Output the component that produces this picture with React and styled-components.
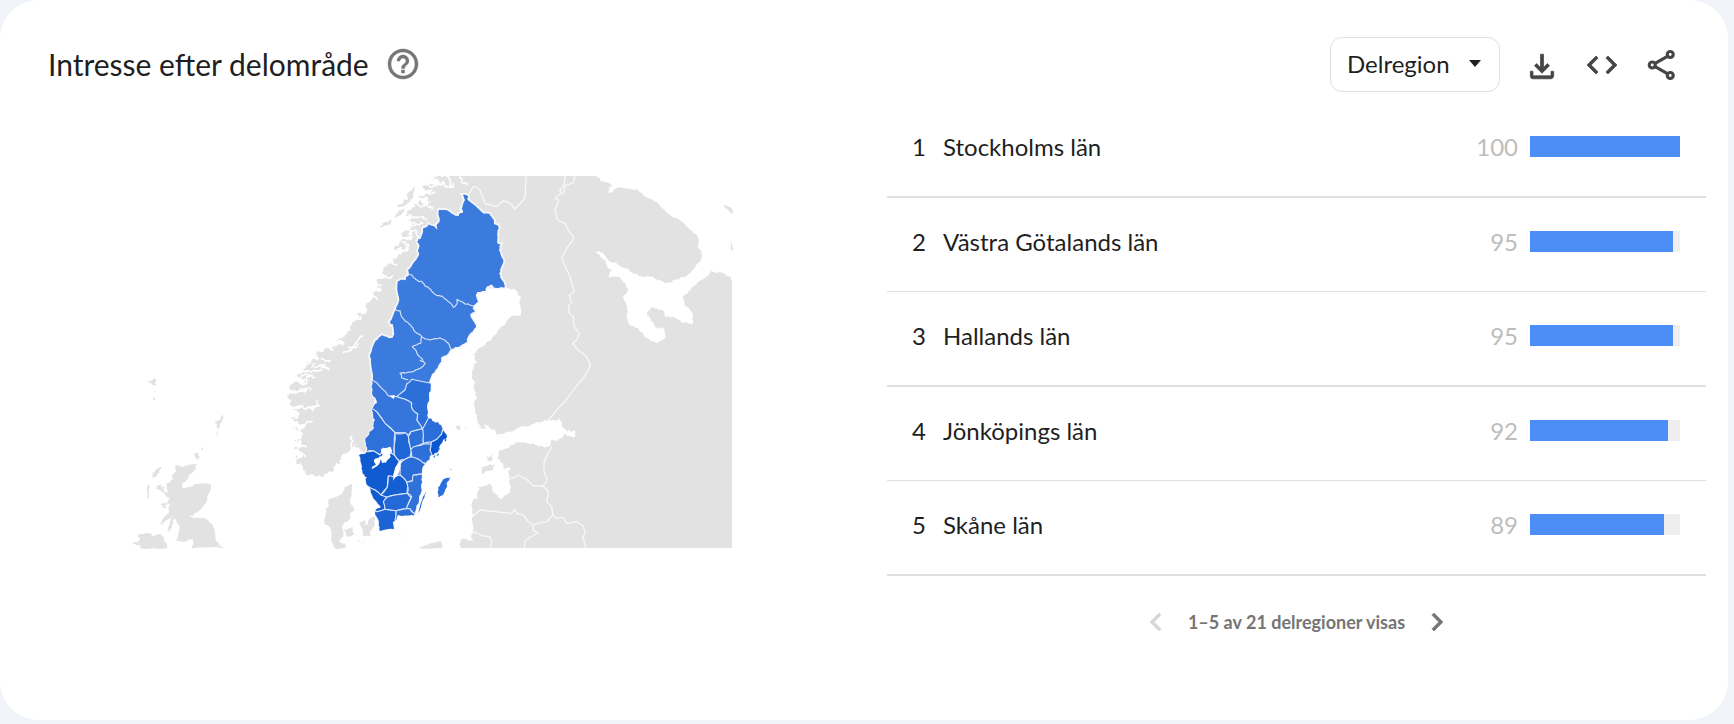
import React, { useState } from "react";
import styled, { createGlobalStyle } from "styled-components";

const GlobalStyle = createGlobalStyle`
  *, *::before, *::after { box-sizing: border-box; }
  body {
    margin: 0;
    background: #f0f4f9;
    color: #1f1f1f;
    font-family: "Google Sans", Lato, Roboto, sans-serif;
  }
  button, select { font: inherit; color: inherit; }
`;

const Card = styled.main`
  margin: 0 6px 4px 0;
  background: #fff;
  border-radius: 38px;
`;

const Header = styled.header`
  display: flex;
  align-items: flex-start;
  justify-content: space-between;
  gap: 24px;
  min-height: 103px;
  padding: 37px 48px 0 48px;
`;

const TitleGroup = styled.div`
  display: flex;
  align-items: center;
  gap: 16px;
  height: 54px;
`;

const Title = styled.h1`
  margin: 0;
  font-size: 30px;
  line-height: 36px;
  font-weight: 400;
`;

const IconButton = styled.button`
  display: flex;
  align-items: center;
  justify-content: center;
  width: 36px;
  height: 36px;
  padding: 0;
  border: 0;
  background: none;
  color: ${(p) => p.$color || "#444746"};
  cursor: pointer;
  &:disabled { cursor: default; }
`;

const Icon = styled.svg`
  width: 36px;
  height: 36px;
  flex: none;
  fill: currentColor;
  stroke: currentColor;
  stroke-width: ${(p) => p.$weight || 0};
`;

const Actions = styled.div`
  display: flex;
  align-items: center;
  gap: 24px;
`;

const SelectBox = styled.label`
  position: relative;
  display: block;
`;

const Select = styled.select`
  appearance: none;
  width: 170px;
  height: 55px;
  padding: 0 44px 2px 16px;
  border: 1px solid #e0e0e0;
  border-radius: 12px;
  background: #fff;
  font-size: 24px;
  cursor: pointer;
`;

const Caret = styled.svg`
  position: absolute;
  top: 23px;
  right: 18px;
  width: 14px;
  height: 8px;
  fill: #1f1f1f;
  pointer-events: none;
`;

const Content = styled.div`
  display: grid;
  grid-template-columns: minmax(0, 839fr) minmax(0, 819fr);
  padding: 0 22px 52px 48px;
`;

const MapFigure = styled.figure`
  margin: 0;
`;

const MapSvg = styled.svg`
  display: block;
  width: 100%;
  height: auto;
`;

const Ranking = styled.table`
  width: 100%;
  border-collapse: separate;
  border-spacing: 0;
  font-size: 24px;
  line-height: 28px;
`;

const Row = styled.tr`
  height: 94px;
  & > * {
    padding: 30px 0 0;
    border-bottom: 1px solid #e0e0e0;
    vertical-align: top;
    text-align: left;
    font-weight: 400;
  }
  &:nth-child(odd) { height: 95px; }
  &:nth-child(odd) > * { border-bottom-width: 2px; }
`;

const Rank = styled.td`
  width: 56px;
  && { padding-left: 25px; }
`;

const Value = styled.td`
  width: 80px;
  color: #bdbdbd;
  && { text-align: right; padding-right: 12px; }
`;

const BarCell = styled.td`
  width: 176px;
  && { padding: 33px 26px 0 0; }
`;

const Track = styled.div`
  height: 21px;
  background: #eee;
`;

const Fill = styled.div`
  height: 100%;
  background: #4c8df6;
`;

const Pager = styled.nav`
  display: flex;
  align-items: center;
  justify-content: center;
  gap: 14px;
  height: 92px;
  color: #757575;
  font-size: 18px;
  line-height: 24px;
  font-weight: 700;
`;

const parse = (s) => s.trim().split(/\s+/).map((p) => p.split(",").map(Number));

// Map tiles are drawn at three times map scale, each with its own origin.
const at = (ox, oy, s) => parse(s).map(([x, y]) => [ox + x / 3, oy + y / 3]);

const noise = (n) => {
  const v = Math.sin(n * 127.1 + 11.7) * 43758.5453;
  return (v - Math.floor(v)) * 2 - 1;
};

// Midpoint displacement gives the coast its ragged edge.
const rough = (pts, amp, depth = 2) => {
  let out = pts;
  let a = amp;
  for (let d = 0; d < depth; d += 1) {
    const next = [];
    out.forEach((p, i) => {
      next.push(p);
      const q = out[i + 1];
      if (!q) return;
      const dx = q[0] - p[0];
      const dy = q[1] - p[1];
      const len = Math.hypot(dx, dy) || 1;
      const k = noise(i + d * 57 + p[0]) * Math.min(a, len / 2);
      next.push([(p[0] + q[0]) / 2 - (dy / len) * k, (p[1] + q[1]) / 2 + (dx / len) * k]);
    });
    out = next;
    a *= 0.7;
  }
  return out;
};

const path = (pts) => "M" + pts.map(([x, y]) => `${x.toFixed(1)} ${y.toFixed(1)}`).join("L");

const KOLA = parse(`597,176 602,182 612,185 608,193 614,190 618,187 629,189 640,192 657,202 670,215 687,227 697,235
698,248 702,252 700,262 693,270 683,277 672,282 663,282 650,277 637,274 627,268 618,265 612,262 603,253 595,252
602,258 607,265 612,270 608,277 618,277 626,285 627,293 623,298 627,307 627,317 629,324 635,328 642,332 647,338
657,343 665,338 663,328 655,327 647,315 652,307 662,310 665,317 673,317 683,323 693,323 692,313 684,302 684,295
695,285 705,278 712,270 717,273 723,273 728,277 732,280`);
const BALTIC = parse(`460,548 460,540 473,540 473,530 472,517 472,503 477,493 478,487 488,483 495,493 502,499
509,493 509,477 511,468 503,467 500,460 500,450 510,445 523,442 537,445 548,447 552,440 562,438 565,434 575,436
573,431 563,428 558,417 552,421 537,422 520,427 497,435 494,429 490,428 485,424 480,425 477,420 475,410 477,398
475,383 472,370 477,362 473,355 485,345 497,333 510,317 521,314 521,298 515,290 506,288`);
const NORWAY = parse(`364,453 359,452 354,448 352,437 351,448 342,455 333,467 326,474 317,476 303,470 296,463
295,456 302,457 294,448 303,446 294,440 303,433 293,428 305,424 291,418 300,414 290,409 316,407 290,405 289,393
308,390 289,388 293,384 306,380 298,374 318,370 303,369 316,363 306,362 322,360 316,354 334,350 343,345 336,341
347,334 360,320 358,316 366,308 367,303 374,292 380,287 377,282 387,276 383,270 393,258 405,252 394,250 406,240
413,236 406,231 416,224 408,221 421,214 411,211 422,207 414,203 429,203 418,196 433,190 423,186 440,184 427,181
434,177 445,176`);
const LAND = [
  ...rough(KOLA, 1.5, 3),
  [732, 548],
  ...rough(BALTIC, 2, 3),
  [440, 290], [400, 340], [376, 380], [372, 440],
  ...rough(NORWAY, 4, 3),
];

const NORTH = [350, 170];
const SOUTH = [350, 360];
const EAST = [540, 170];
const WEST = [120, 360];
const SOUTHEAST = [440, 360];
const NORDLAND = [280, 170];

const ISLANDS = [
  [WEST, "165,315 195,318 230,312 230,325 205,352 188,368 184,384 225,372 270,372 273,388 262,420 240,450 222,462 205,470 245,475 265,480 280,500 290,545 312,565 215,565 220,535 195,545 168,542 180,500 165,475 146,512 160,465 124,492 148,455 150,430 128,440 150,415 120,398 146,395 138,372 158,358 152,345 168,335"],
  [WEST, "38,552 60,535 52,525 85,520 100,528 120,522 130,530 142,556 140,565 60,565 62,556"],
  [WEST, "96,350 104,335 125,320 118,340 105,352"],
  [WEST, "84,375 90,375 86,415 82,412"],
  [WEST, "118,375 124,382 130,376 138,400 122,392 106,385"],
  [WEST, "124,430 140,425 138,445 126,442"],
  [WEST, "140,515 150,485 165,465 160,490 148,512"],
  [WEST, "120,492 132,484 128,498"],
  [WEST, "222,285 234,278 240,290 230,298"],
  [WEST, "236,264 240,266 238,270"],
  [WEST, "248,262 254,264 246,274"],
  [WEST, "283,185 300,180 308,165 300,192 292,210 293,225 289,222 290,200"],
  [WEST, "84,68 96,62 106,56 104,70 98,66 106,78 94,70"],
  [WEST, "100,92 106,96 103,98"],
  [WEST, "102,112 105,114 104,120"],
  [WEST, "625,418 660,405 680,378 695,372 695,405 690,430 706,450 690,462 688,480 665,500 668,530 658,545 675,550 672,565 645,565 632,540 632,508 615,495 617,460 625,440"],
  [WEST, "672,508 698,500 702,525 685,532"],
  [SOUTH, "28,490 45,482 50,495 60,475 75,470 72,500 60,515 62,530 38,528"],
  [SOUTH, "22,540 42,545 40,552"],
  [SOUTH, "205,565 240,550 275,545 278,565"],
  [SOUTH, "150,522 160,530 154,533"],
  [SOUTHEAST, "125,325 150,312 165,318 160,328 130,342"],
  [SOUTHEAST, "138,290 160,286 155,303 144,300"],
  [SOUTHEAST, "48,200 56,196 60,204 52,208"],
  [SOUTHEAST, "72,202 80,204 76,208"],
  [SOUTHEAST, "118,205 132,196 140,206 128,210"],
  [EAST, "552,105 578,120 578,133 565,120"],
  [EAST, "578,205 570,238 578,242"],
  [NORDLAND, "350,108 372,94 368,84 385,90 384,68 405,48 400,72 390,95 375,104 352,115"],
  [NORDLAND, "380,125 405,110 420,90 430,96 420,118 396,132 378,138"],
  [NORDLAND, "372,115 362,135 340,145 345,135"],
  [NORDLAND, "300,170 310,158 335,148 325,165 306,172"],
  [NORDLAND, "362,192 388,178 382,190 395,195 372,202"],
  [NORDLAND, "155,530 185,522 160,540"],
  [NORDLAND, "226,432 245,428 240,440"],
];

const FJORDS = [
  [NORDLAND, "455,25 475,45 492,35 502,52 520,40"],
  [NORDLAND, "500,20 512,32 515,52"],
  [NORDLAND, "540,20 548,38 562,45"],
  [NORDLAND, "430,60 448,70 465,66"],
  [NORDLAND, "440,45 455,52 468,48"],
  [NORDLAND, "402,90 425,110 440,105 455,118"],
  [NORDLAND, "425,95 438,90 450,96"],
  [NORDLAND, "400,145 425,140 440,150"],
  [NORDLAND, "395,158 412,164 428,160"],
  [NORDLAND, "380,180 410,185 418,200"],
  [NORDLAND, "365,215 385,230 380,242"],
  [NORDLAND, "352,238 372,240 385,236"],
  [NORDLAND, "310,320 325,325 338,316"],
  [NORDLAND, "325,262 335,280 350,286"],
  [NORDLAND, "280,350 305,345"],
  [NORDLAND, "270,385 285,380 292,388"],
  [NORDLAND, "190,548 215,540 232,515 248,498"],
  [NORDLAND, "205,530 235,522"],
  [NORDLAND, "50,630 85,615 105,622"],
  [NORDLAND, "95,590 125,588 148,600"],
  [NORDLAND, "125,565 140,572 150,570"],
  [WEST, "515,145 550,142 580,152 592,122"],
  [WEST, "575,140 598,138"],
  [WEST, "525,235 545,205 560,188 577,184"],
  [WEST, "520,175 525,200 530,250"],
  [WEST, "512,92 550,92 572,90"],
  [WEST, "540,68 560,72 568,50"],
  [WEST, "535,250 558,262"],
  [WEST, "522,270 540,278 556,288"],
  [WEST, "694,228 692,250 698,275"],
  [WEST, "568,35 600,32 615,12"],
  [WEST, "600,14 620,22"],
];

const BORDERS = [
  [NORTH, "355,75 370,50 380,52 390,60 405,100 440,110 460,92 480,100 495,117 525,85 528,20"],
  [EAST, "75,20 72,45 60,60 62,70 45,85 56,90 45,120 52,150 75,160 88,185 100,200 98,210 80,235 65,265 90,320 103,365 88,375 95,400 85,405 88,430 100,440 103,470 118,490 110,510 98,520 115,540 140,560 152,585 145,600"],
  [EAST, "105,20 100,38 75,48 70,70 62,70"],
  [SOUTHEAST, "445,0 452,15 430,55 420,65 370,130 355,145 325,180"],
  [SOUTHEAST, "335,262 318,290 312,310 312,335 322,360 310,378 280,378 262,360 235,345 225,352 210,355"],
  [SOUTHEAST, "310,378 325,395 320,425 335,440 338,465 320,485 300,488 280,495 265,485 250,465 230,460 225,448 215,460 165,455 120,450 97,470"],
  [SOUTHEAST, "338,465 350,475 370,472 380,490 410,485 430,498 436,520 428,530 438,565"],
  [SOUTHEAST, "280,495 280,512 293,518 270,532 255,542 253,565"],
  [SOUTHEAST, "100,515 130,528 150,530 155,545 150,565"],
];

const SWEDEN = parse(`461,194 468,195 469,200 482,211 490,213 495,220 496,224 500,227 498,242 502,243 500,250 504,259
501,270 501,277 506,288 497,289 492,286 488,287 487,293 478,293 479,302 474,307 476,312 471,315 477,326 472,333
468,342 458,348 450,352 442,358 441,363 435,373 430,382 429,393 427,407 428,418 432,421 438,422 443,430 447,437
442,443 438,452 432,455 429,460 424,465 422,477 421,487 419,500 415,512 412,515 398,515 393,522 394,529 380,531
379,523 375,512 381,507 372,495 367,485 367,477 363,474 362,467 359,455 366,453 366,443 367,437 374,428 375,420
372,410 377,403 372,393 372,380 370,360 369,355 375,340 382,334 392,337 392,325 388,322 395,309 398,297 397,281
405,279 408,273 407,270 418,255 418,248 416,241 420,238 422,229 428,223 436,227 439,220 438,209 450,211 458,215
462,212 460,209 464,200 461,194`);

const COUNTIES = [
  ["Gävleborg", "#2c6fd9", "290,72 240,69 185,58 170,72 165,90 140,110 165,118 185,130 187,148 203,162 200,180 210,195 218,206 232,200 240,175 290,175"],
  ["Dalarna", "#3575dc", "45,58 65,60 80,68 95,85 115,108 140,110 165,118 185,130 187,148 203,162 200,180 218,206 182,215 175,228 165,218 135,218 105,190 80,155 65,145 45,150"],
  ["Värmland", "#2f71da", "20,150 65,145 80,155 105,190 135,218 133,255 133,285 100,265 90,285 70,272 48,275 20,278"],
  ["Örebro", "#2067d6", "135,218 150,222 165,218 175,228 176,245 185,265 180,290 165,298 148,303 133,285 133,255"],
  ["Västmanland", "#2d70da", "175,228 182,215 218,206 222,230 220,250 200,258 182,268"],
  ["Uppsala", "#2b6ed9", "218,206 240,165 290,175 278,212 270,235 245,245 222,250 220,230"],
  ["Stockholm", "#0b57d0", "245,245 260,238 275,222 278,210 320,205 310,310 245,310 240,265"],
  ["Södermanland", "#2d70da", "182,268 200,258 222,252 243,252 240,270 255,310 218,308 205,298 185,290"],
  ["Östergötland", "#2a6dd9", "150,345 148,310 165,298 185,290 205,298 218,308 250,315 240,350 210,342 190,345 188,362 170,366"],
  ["Västra Götaland", "#115bd1", "10,278 48,275 70,272 90,285 100,265 133,285 148,303 130,350 115,348 112,382 92,405 75,390 55,380 10,382"],
  ["Jönköping", "#165fd3", "115,348 130,350 150,345 170,366 174,382 172,400 135,405 110,412 92,405 112,382"],
  ["Kalmar", "#3072da", "170,366 188,362 190,345 210,342 250,345 235,470 192,460 180,446 168,446 185,410 172,400 174,382"],
  ["Kronoberg", "#2469d7", "110,412 135,405 172,400 183,412 168,446 140,452 105,448 100,425"],
  ["Halland", "#115bd1", "40,378 55,380 75,390 92,405 110,412 100,425 105,448 80,455 40,420"],
  ["Skåne", "#1c64d5", "60,452 80,455 105,448 138,452 140,480 140,530 60,530"],
  ["Blekinge", "#2c6fd9", "138,452 168,446 180,446 192,460 210,480 135,480"],
];

const COUNTY_LINES = [
  [NORTH, "172,312 185,315 195,325 208,335 218,336 225,348 242,358 258,375 275,378 292,392 310,412 322,398 322,388 345,402 360,405 378,412"],
  [NORTH, "132,418 150,422 155,440 170,455 182,465 195,485 215,500 240,510 270,503 295,520 302,535 302,552"],
  [NORTH, "215,500 212,520 187,530 200,548 220,572"],
  [SOUTH, "210,0 226,10 210,25 185,36 150,40 155,54 175,60"],
];

const LAKES = [
  "65,328 78,312 72,300 88,290 98,284 94,266 120,260 126,270 122,290 108,308 98,310 92,298 82,318",
  "128,362 134,330 146,308 158,300 150,325 138,350",
  "118,108 135,106 132,118",
];

const OUTER_ISLANDS = [
  "265,412 265,382 280,358 302,352 290,368 290,382 280,404",
  "205,460 214,425 228,394 224,412 210,450",
  "258,288 262,278 266,286",
  "262,262 272,266 266,272",
  "250,290 256,286 254,296",
  "284,236 290,240 284,244",
  "300,326 304,326 302,330",
];

const shape = ([[ox, oy], s]) => path(at(ox, oy, s));

function RegionMap() {
  const sweden = path(rough(SWEDEN, 1.3)) + "Z";
  return (
    <MapFigure>
      <MapSvg viewBox="48 103 839 460" role="img" aria-label="Karta över Sverige">
        <defs>
          <clipPath id="frame"><rect x="130" y="176" width="603" height="373" /></clipPath>
          <clipPath id="sweden"><path d={sweden} /></clipPath>
        </defs>
        <g clipPath="url(#frame)">
          <path d={path(LAND) + "Z"} fill="#e2e2e2" />
          {ISLANDS.map((i) => (
            <path key={i[1]} d={path(rough([...at(...i[0], i[1]), at(...i[0], i[1])[0]], 1.4)) + "Z"} fill="#e2e2e2" />
          ))}
          <g fill="none" stroke="#fff" strokeLinejoin="round" strokeLinecap="round">
            {FJORDS.map((f) => (
              <path key={f[1]} d={path(rough(at(...f[0], f[1]), 2.4, 3))} strokeWidth="1.4" />
            ))}
            {BORDERS.map((b) => <path key={b[1]} d={shape(b)} stroke="#f8f8f8" strokeWidth="1.3" />)}
          </g>
          <path d={sweden} fill="#3c7bde" stroke="#f4f6fb" strokeWidth="1.8" />
          <g clipPath="url(#sweden)" stroke="#dbe6fa" strokeWidth="1.1" strokeLinejoin="round">
            {COUNTIES.map(([name, fill, s]) => (
              <path key={name} d={path(rough([...at(...SOUTH, s), at(...SOUTH, s)[0]], 0.7, 1)) + "Z"} fill={fill} />
            ))}
            {COUNTY_LINES.map((l) => <path key={l[1]} d={path(rough(at(...l[0], l[1]), 0.8))} fill="none" />)}
          </g>
          {LAKES.map((l) => <path key={l} d={path(rough(at(...SOUTH, l), 1)) + "Z"} fill="#fff" />)}
          {OUTER_ISLANDS.map((l) => <path key={l} d={path(rough(at(...SOUTH, l), 0.8)) + "Z"} fill="#2c6fd9" />)}
        </g>
      </MapSvg>
    </MapFigure>
  );
}

const REGIONS = [
  ["Stockholms län", 100],
  ["Västra Götalands län", 95],
  ["Hallands län", 95],
  ["Jönköpings län", 92],
  ["Skåne län", 89],
];

export default function App() {
  const [level, setLevel] = useState("Delregion");
  return (
    <>
      <GlobalStyle />
      <Card>
        <Header>
          <TitleGroup>
            <Title>Intresse efter delområde</Title>
            <IconButton $color="#757775" aria-label="Hjälp">
              <Icon viewBox="0 0 24 24" $weight={0.3}>
                <path d="M11 18h2v-2h-2v2zm1-16C6.480 2 2 6.480 2 12s4.480 10 10 10 10-4.480 10-10S17.520 2 12 2zm0 18c-4.410 0-8-3.590-8-8s3.590-8 8-8 8 3.590 8 8-3.590 8-8 8zm0-14c-2.210 0-4 1.790-4 4h2c0-1.100.9-2 2-2s2 .9 2 2c0 2-3 1.750-3 5h2c0-2.250 3-2.500 3-5 0-2.210-1.790-4-4-4z" />
              </Icon>
            </IconButton>
          </TitleGroup>
          <Actions>
            <SelectBox>
              <Select aria-label="Nivå" value={level} onChange={(e) => setLevel(e.target.value)}>
                <option>Delregion</option>
                <option>Stad</option>
              </Select>
              <Caret viewBox="0 0 14 8"><path d="M1 0h12L7 7z" /></Caret>
            </SelectBox>
            <IconButton aria-label="Ladda ned">
              <Icon viewBox="0 0 24 24" $weight={0.5}>
                <path d="M12 17.500 7 12.500l1.400-1.450 2.600 2.600V4.800h2v8.850l2.600-2.600L17 12.500zM6 21.200q-.83 0-1.410-.59Q4.200 20.030 4.200 19.200v-3h1.800v3h12v-3h1.800v3q0 .83-.59 1.410-.58.59-1.210.59z" />
              </Icon>
            </IconButton>
            <IconButton aria-label="Bädda in">
              <Icon viewBox="0 0 24 24" $weight={0.5}>
                <path d="M9.400 16.600 4.800 12l4.600-4.600L8 6l-6 6 6 6 1.400-1.400zm5.200 0 4.600-4.600-4.600-4.600L16 6l6 6-6 6-1.400-1.400z" />
              </Icon>
            </IconButton>
            <IconButton aria-label="Dela">
              <Icon viewBox="0 0 24 24">
                <g fill="none" strokeWidth="2.1">
                  <circle cx="17.500" cy="5" r="2" />
                  <circle cx="5.500" cy="12" r="2" />
                  <circle cx="17.500" cy="19" r="2" />
                  <path d="M7.400 10.900l8.200-4.700M7.400 13.100l8.200 4.700" />
                </g>
              </Icon>
            </IconButton>
          </Actions>
        </Header>
        <Content>
          <RegionMap />
          <section>
            <Ranking aria-label="Intresse efter delområde">
              <tbody>
                {REGIONS.map(([name, value], i) => (
                  <Row key={name}>
                    <Rank>{i + 1}</Rank>
                    <th scope="row">{name}</th>
                    <Value>{value}</Value>
                    <BarCell><Track><Fill style={{ width: `${value}%` }} /></Track></BarCell>
                  </Row>
                ))}
              </tbody>
            </Ranking>
            <Pager aria-label="Sidor">
              <IconButton $color="#d6d6d6" disabled aria-label="Föregående">
                <Icon viewBox="0 0 24 24" $weight={0.4}><path d="M15.410 7.410 14 6l-6 6 6 6 1.410-1.410L10.830 12z" /></Icon>
              </IconButton>
              <span>1–5 av 21 delregioner visas</span>
              <IconButton $color="#757575" aria-label="Nästa">
                <Icon viewBox="0 0 24 24" $weight={0.4}><path d="M10 6 8.590 7.410 13.170 12l-4.580 4.590L10 18l6-6z" /></Icon>
              </IconButton>
            </Pager>
          </section>
        </Content>
      </Card>
    </>
  );
}
